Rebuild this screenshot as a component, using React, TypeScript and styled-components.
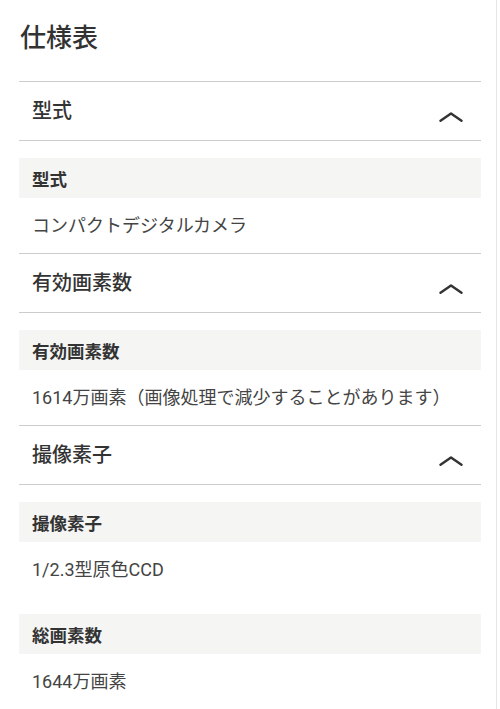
import React from "react";
import styled, { createGlobalStyle } from "styled-components";

const GlobalStyle = createGlobalStyle`
  body {
    margin: 0;
    background: #ffffff;
    font-family: Roboto, "Noto Sans CJK JP", "Noto Sans", sans-serif;
    color: #333333;
  }
`;

const Page = styled.div`
  width: 497px;
  min-height: 709px;
  box-sizing: border-box;
  padding: 0 15px 0 19px;
  border-right: 1px solid #e6e6e6;
`;

const Title = styled.h1`
  margin: 0;
  height: 81px;
  box-sizing: border-box;
  padding: 20px 1px 0;
  font-size: 26px;
  line-height: 36px;
  font-weight: 500;
  color: #333333;
`;

const Section = styled.section`
  border-top: 1px solid #cccccc;
`;

const SectionHeader = styled.div`
  display: flex;
  justify-content: space-between;
  align-items: center;
  height: 58px;
  padding: 0 18px 0 13px;
  border-bottom: 1px solid #cccccc;
`;

const Heading = styled.h2`
  margin: 0;
  font-size: 20px;
  line-height: 28px;
  font-weight: 500;
  color: #333333;
`;

const Chevron = styled.svg`
  margin-top: 12px;
  width: 24px;
  height: 10px;
`;

const Item = styled.div`
  margin-top: 17px;
`;

const Label = styled.div`
  display: flex;
  align-items: center;
  height: 40px;
  padding: 0 13px;
  background: #f5f5f3;
  font-size: 17.5px;
  font-weight: 700;
  color: #333333;
`;

const Value = styled.div`
  display: flex;
  align-items: center;
  height: 55px;
  box-sizing: border-box;
  padding: 0 13px 3px;
  font-size: 18px;
  font-weight: 400;
  color: #444444;
  white-space: nowrap;
`;

type Spec = { label: string; value: string };

const sections: { title: string; specs: Spec[] }[] = [
  { title: "型式", specs: [{ label: "型式", value: "コンパクトデジタルカメラ" }] },
  {
    title: "有効画素数",
    specs: [
      {
        label: "有効画素数",
        value: "1614万画素（画像処理で減少することがあります）",
      },
    ],
  },
  {
    title: "撮像素子",
    specs: [
      { label: "撮像素子", value: "1/2.3型原色CCD" },
      { label: "総画素数", value: "1644万画素" },
    ],
  },
];

const UpIcon: React.FC = () => (
  <Chevron viewBox="0 0 24 10">
    <path
      d="M1.5 8.8 L12 1.5 L22.5 8.8"
      fill="none"
      stroke="#333333"
      strokeWidth="2.4"
      strokeLinecap="round"
      strokeLinejoin="round"
    />
  </Chevron>
);

const App: React.FC = () => (
  <>
    <GlobalStyle />
    <Page>
      <Title>仕様表</Title>
      {sections.map((section) => (
        <Section key={section.title}>
          <SectionHeader>
            <Heading>{section.title}</Heading>
            <UpIcon />
          </SectionHeader>
          {section.specs.map((spec) => (
            <Item key={spec.label}>
              <Label>{spec.label}</Label>
              <Value>{spec.value}</Value>
            </Item>
          ))}
        </Section>
      ))}
    </Page>
  </>
);

export default App;
